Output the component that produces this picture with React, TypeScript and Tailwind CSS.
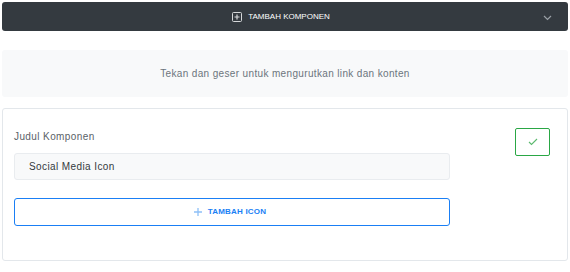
import React from "react";

export default function App() {
  const font = { fontFamily: '"Liberation Sans", Arial, sans-serif' };
  return (
    <div className="w-[570px] h-[272px] bg-white p-[2px] flex flex-col" style={font}>
      <div className="h-[29px] bg-[#343a40] rounded-[3px] flex items-center relative">
        <div className="flex-1 flex items-center justify-center gap-[6px] pr-[8px]">
          <svg width="10" height="10" viewBox="0 0 10 10" className="mt-[1px]">
            <rect x="0.5" y="0.5" width="9" height="9" rx="1" fill="none" stroke="#d6d8da" strokeWidth="1" />
            <path d="M5 2.5v5M2.5 5h5" stroke="#d6d8da" strokeWidth="1.2" />
          </svg>
          <span className="text-[8px] text-white tracking-[0px] uppercase">Tambah Komponen</span>
        </div>
        <svg width="9" height="6" viewBox="0 0 9 6" className="absolute right-[16px] top-[13px]">
          <path d="M1 1l3.5 3.5L8 1" fill="none" stroke="#9aa0a6" strokeWidth="1.2" />
        </svg>
      </div>
      <div className="mt-[19px] h-[47px] bg-[#f8f9fa] rounded-[3px] flex items-center justify-center">
        <span className="text-[10px] text-[#6c757d] tracking-[0.35px]">Tekan dan geser untuk mengurutkan link dan konten</span>
      </div>
      <div className="mt-[11px] h-[153px] border border-[#e3e7eb] rounded-[3px] flex pl-[11px] pr-[17px]">
        <div className="flex flex-col w-[436px]">
          <span className="mt-[20px] text-[10px] text-[#5a6168] tracking-[0.4px]">Judul Komponen</span>
          <div className="mt-[9px] h-[27px] bg-[#f8f9fa] border border-[#e9ecef] rounded-[3px] flex items-center pl-[14px]">
            <span className="text-[10px] text-[#343a40] tracking-[0.4px]">Social Media Icon</span>
          </div>
          <div className="mt-[18px] h-[28px] border border-[#1a7ff5] rounded-[3px] flex items-center justify-center gap-[6px] pr-[4px]">
            <svg width="8" height="8" viewBox="0 0 8 8">
              <path d="M4 0v8M0 4h8" stroke="#8ec0f7" strokeWidth="1.3" />
            </svg>
            <span className="text-[8px] font-bold text-[#1a7ff5] tracking-[0.2px]">TAMBAH ICON</span>
          </div>
        </div>
        <div className="flex-1 flex justify-end">
          <div className="mt-[19px] w-[35px] h-[28px] border border-[#2aa745] rounded-[2px] flex items-center justify-center">
            <svg width="10" height="8" viewBox="0 0 10 8">
              <path d="M1 4l2.5 2.5L9 1" fill="none" stroke="#5cb96f" strokeWidth="1.1" />
            </svg>
          </div>
        </div>
      </div>
    </div>
  );
}
